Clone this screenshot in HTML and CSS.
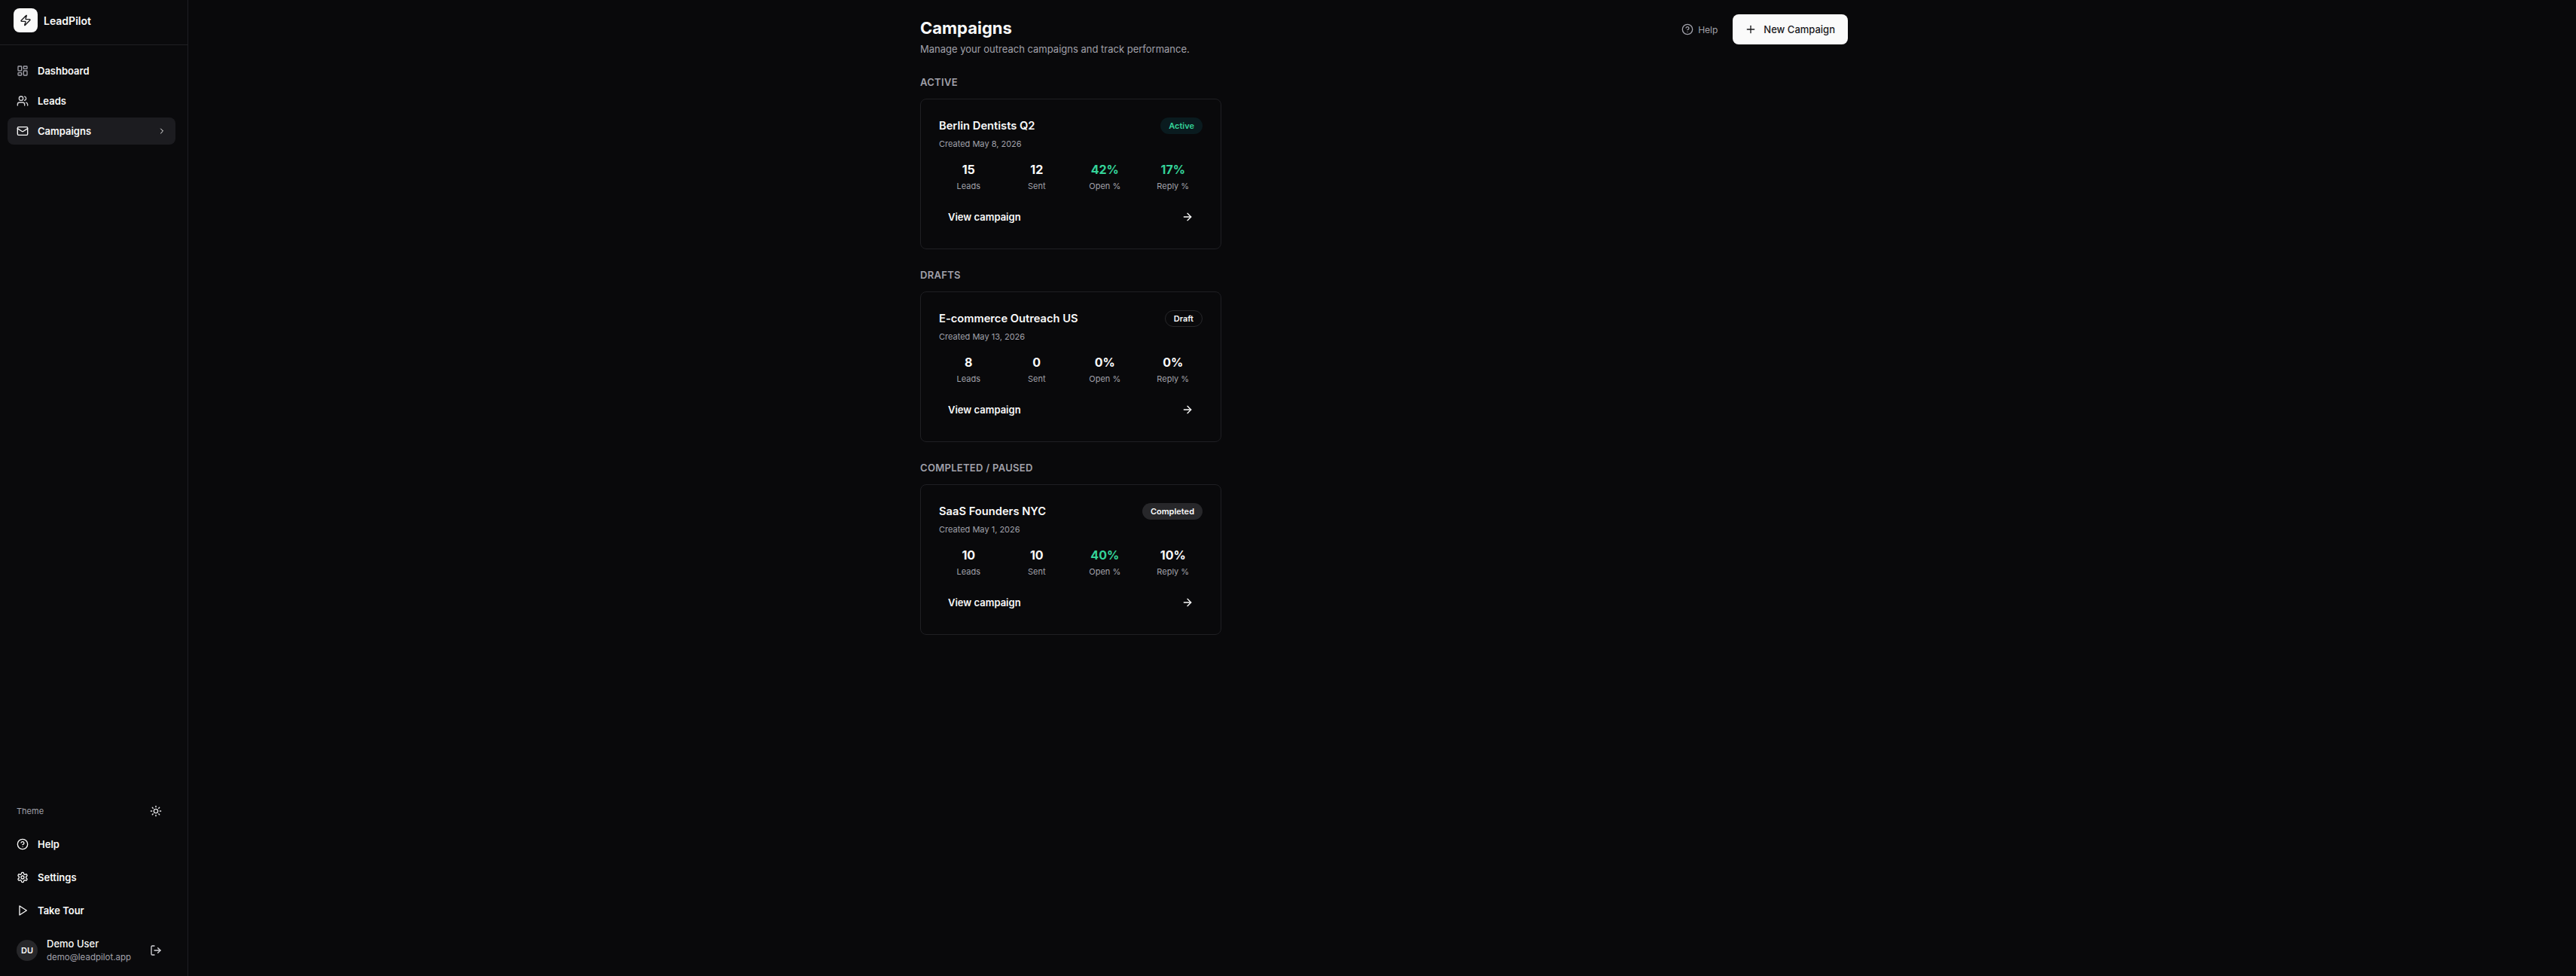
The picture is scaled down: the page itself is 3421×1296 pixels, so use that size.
FILE: index.html
```html
<!DOCTYPE html>
<html lang="en">
<head>
  <meta charset="UTF-8" />
  <title>Campaigns - LeadPilot</title>
  <link rel="stylesheet" href="styles.css">
</head>
<body>
  <svg class="sprite" xmlns="http://www.w3.org/2000/svg">
    <symbol id="i-zap" viewBox="0 0 24 24"><path d="M4 14a1 1 0 0 1-.78-1.63l9.9-10.2a.5.5 0 0 1 .86.46l-1.92 6.02A1 1 0 0 0 13 10h7a1 1 0 0 1 .78 1.63l-9.9 10.2a.5.5 0 0 1-.86-.46l1.92-6.02A1 1 0 0 0 11 14z"/></symbol>
    <symbol id="i-dashboard" viewBox="0 0 24 24"><rect x="3" y="3" width="7" height="9" rx="1"/><rect x="14" y="3" width="7" height="5" rx="1"/><rect x="14" y="12" width="7" height="9" rx="1"/><rect x="3" y="16" width="7" height="5" rx="1"/></symbol>
    <symbol id="i-users" viewBox="0 0 24 24"><path d="M16 21v-2a4 4 0 0 0-4-4H6a4 4 0 0 0-4 4v2"/><circle cx="9" cy="7" r="4"/><path d="M22 21v-2a4 4 0 0 0-3-3.87"/><path d="M16 3.13a4 4 0 0 1 0 7.75"/></symbol>
    <symbol id="i-mail" viewBox="0 0 24 24"><rect x="2" y="4" width="20" height="16" rx="2"/><path d="m22 7-8.97 5.7a1.94 1.94 0 0 1-2.06 0L2 7"/></symbol>
    <symbol id="i-chevron" viewBox="0 0 24 24"><path d="m9 18 6-6-6-6"/></symbol>
    <symbol id="i-sun" viewBox="0 0 24 24"><circle cx="12" cy="12" r="4"/><path d="M12 2v2"/><path d="M12 20v2"/><path d="m4.93 4.93 1.41 1.41"/><path d="m17.66 17.66 1.41 1.41"/><path d="M2 12h2"/><path d="M20 12h2"/><path d="m6.34 17.66-1.41 1.41"/><path d="m19.07 4.93-1.41 1.41"/></symbol>
    <symbol id="i-help" viewBox="0 0 24 24"><circle cx="12" cy="12" r="10"/><path d="M9.09 9a3 3 0 0 1 5.83 1c0 2-3 3-3 3"/><path d="M12 17h.01"/></symbol>
    <symbol id="i-settings" viewBox="0 0 24 24"><path d="M12.22 2h-.44a2 2 0 0 0-2 2v.18a2 2 0 0 1-1 1.73l-.43.25a2 2 0 0 1-2 0l-.15-.08a2 2 0 0 0-2.73.73l-.22.38a2 2 0 0 0 .73 2.73l.15.1a2 2 0 0 1 1 1.72v.51a2 2 0 0 1-1 1.74l-.15.09a2 2 0 0 0-.73 2.73l.22.38a2 2 0 0 0 2.73.73l.15-.08a2 2 0 0 1 2 0l.43.25a2 2 0 0 1 1 1.73V20a2 2 0 0 0 2 2h.44a2 2 0 0 0 2-2v-.18a2 2 0 0 1 1-1.73l.43-.25a2 2 0 0 1 2 0l.15.08a2 2 0 0 0 2.73-.73l.22-.39a2 2 0 0 0-.73-2.73l-.15-.08a2 2 0 0 1-1-1.74v-.5a2 2 0 0 1 1-1.74l.15-.09a2 2 0 0 0 .73-2.73l-.22-.38a2 2 0 0 0-2.73-.73l-.15.08a2 2 0 0 1-2 0l-.43-.25a2 2 0 0 1-1-1.73V4a2 2 0 0 0-2-2z"/><circle cx="12" cy="12" r="3"/></symbol>
    <symbol id="i-play" viewBox="0 0 24 24"><polygon points="6 3 20 12 6 21 6 3"/></symbol>
    <symbol id="i-logout" viewBox="0 0 24 24"><path d="M9 21H5a2 2 0 0 1-2-2V5a2 2 0 0 1 2-2h4"/><path d="m16 17 5-5-5-5"/><path d="M21 12H9"/></symbol>
    <symbol id="i-plus" viewBox="0 0 24 24"><path d="M5 12h14"/><path d="M12 5v14"/></symbol>
    <symbol id="i-arrow" viewBox="0 0 24 24"><path d="M5 12h14"/><path d="m12 5 7 7-7 7"/></symbol>
  </svg>

  <div class="app">
    <aside class="sidebar">
      <div class="brand">
        <div class="brand-logo"><svg class="icon"><use href="#i-zap"/></svg></div>
        <span class="brand-name">LeadPilot</span>
      </div>
      <nav class="nav">
        <a class="nav-item muted-icon"><svg class="icon"><use href="#i-dashboard"/></svg>Dashboard</a>
        <a class="nav-item"><svg class="icon"><use href="#i-users"/></svg>Leads</a>
        <a class="nav-item active"><svg class="icon"><use href="#i-mail"/></svg>Campaigns<svg class="icon icon-12 nav-chevron"><use href="#i-chevron"/></svg></a>
      </nav>
      <div class="sidebar-foot">
        <div class="theme-row">
          <span>Theme</span>
          <svg class="icon"><use href="#i-sun"/></svg>
        </div>
        <a class="foot-item"><svg class="icon"><use href="#i-help"/></svg>Help</a>
        <a class="foot-item"><svg class="icon"><use href="#i-settings"/></svg>Settings</a>
        <a class="foot-item"><svg class="icon"><use href="#i-play"/></svg>Take Tour</a>
        <div class="user-row">
          <div class="avatar">DU</div>
          <div class="user-info">
            <div class="user-name">Demo User</div>
            <div class="user-email">demo@leadpilot.app</div>
          </div>
          <svg class="icon user-logout"><use href="#i-logout"/></svg>
        </div>
      </div>
    </aside>

    <main class="main">
      <div class="content">
        <header class="page-head">
          <div>
            <h1>Campaigns</h1>
            <p class="subtitle">Manage your outreach campaigns and track performance.</p>
          </div>
          <div class="head-actions">
            <a class="help-link"><svg class="icon"><use href="#i-help"/></svg>Help</a>
            <button class="btn-primary"><svg class="icon"><use href="#i-plus"/></svg>New Campaign</button>
          </div>
        </header>

        <section class="group">
          <h2>Active</h2>
          <article class="card">
            <div class="card-top">
              <h3>Berlin Dentists Q2</h3>
              <span class="badge badge-active">Active</span>
            </div>
            <div class="card-date">Created May 8, 2026</div>
            <div class="stats">
              <div class="stat"><b>15</b><span>Leads</span></div>
              <div class="stat"><b>12</b><span>Sent</span></div>
              <div class="stat"><b class="good">42%</b><span>Open %</span></div>
              <div class="stat"><b class="good">17%</b><span>Reply %</span></div>
            </div>
            <a class="card-link">View campaign<svg class="icon"><use href="#i-arrow"/></svg></a>
          </article>
        </section>

        <section class="group">
          <h2>Drafts</h2>
          <article class="card">
            <div class="card-top">
              <h3>E-commerce Outreach US</h3>
              <span class="badge badge-draft">Draft</span>
            </div>
            <div class="card-date">Created May 13, 2026</div>
            <div class="stats">
              <div class="stat"><b>8</b><span>Leads</span></div>
              <div class="stat"><b>0</b><span>Sent</span></div>
              <div class="stat"><b>0%</b><span>Open %</span></div>
              <div class="stat"><b>0%</b><span>Reply %</span></div>
            </div>
            <a class="card-link">View campaign<svg class="icon"><use href="#i-arrow"/></svg></a>
          </article>
        </section>

        <section class="group">
          <h2>Completed / Paused</h2>
          <article class="card">
            <div class="card-top">
              <h3>SaaS Founders NYC</h3>
              <span class="badge badge-done">Completed</span>
            </div>
            <div class="card-date">Created May 1, 2026</div>
            <div class="stats">
              <div class="stat"><b>10</b><span>Leads</span></div>
              <div class="stat"><b>10</b><span>Sent</span></div>
              <div class="stat"><b class="good">40%</b><span>Open %</span></div>
              <div class="stat"><b>10%</b><span>Reply %</span></div>
            </div>
            <a class="card-link">View campaign<svg class="icon"><use href="#i-arrow"/></svg></a>
          </article>
        </section>
      </div>
    </main>
  </div>
</body>
</html>
```

FILE: styles.css
```css
* { box-sizing: border-box; margin: 0; padding: 0; }
html, body { height: 100%; }
body { font-family: Inter, "Liberation Sans", sans-serif; background-color: #09090b; color: #fafafa; font-size: 13px; overflow: hidden; }
a { color: inherit; text-decoration: none; }
.sprite { display: none; }
.icon { width: 16px; height: 16px; fill: none; stroke: currentColor; stroke-width: 2; stroke-linecap: round; stroke-linejoin: round; flex-shrink: 0; }
.icon-12 { width: 12px; height: 12px; }

.app { display: flex; height: 100%; }
.sidebar { width: 250px; flex-shrink: 0; display: flex; flex-direction: column; background-color: #0a0a0c; border-right: 1px solid #1f1f23; }
.brand { height: 60px; display: flex; align-items: center; gap: 8px; padding: 0 18px 5px; border-bottom: 1px solid #1f1f23; }
.brand-logo { width: 32px; height: 32px; border-radius: 8px; background-color: #fafafa; color: #18181b; display: flex; align-items: center; justify-content: center; }
.brand-name { font-size: 14px; font-weight: 600; }
.nav { flex: 1; padding: 16px 16px 0 10px; display: flex; flex-direction: column; gap: 4px; }
.nav-item { height: 36px; display: flex; align-items: center; gap: 12px; padding: 0 12px; border-radius: 8px; font-size: 13px; font-weight: 600; }
.nav-item .icon { color: #d4d4d8; }
.muted-icon .icon { color: #a1a1aa; }
.nav-item.active { background-color: #1c1c20; }
.nav-item.active .icon { color: #fafafa; }
.nav-item .nav-chevron { margin-left: auto; color: #52525b; }
.sidebar-foot { padding: 0 16px 16px 22px; }
.theme-row { display: flex; align-items: center; justify-content: space-between; height: 32px; font-size: 11px; color: #a1a1aa; margin-bottom: 6px; padding-right: 18px; }
.theme-row .icon { color: #e4e4e7; }
.foot-item { height: 44px; display: flex; align-items: center; gap: 12px; font-size: 13px; font-weight: 600; }
.user-row { display: flex; align-items: center; gap: 12px; margin-top: 13px; padding-right: 18px; }
.avatar { width: 28px; height: 28px; border-radius: 50%; background-color: #27272a; display: flex; align-items: center; justify-content: center; font-size: 11px; font-weight: 600; }
.user-info { flex: 1; min-width: 0; }
.user-name { font-size: 13px; font-weight: 500; line-height: 18px; }
.user-email { font-size: 11.5px; color: #a1a1aa; line-height: 18px; }
.user-logout { color: #d4d4d8; }

.main { flex: 1; min-width: 0; display: flex; justify-content: center; padding-left: 5px; }
.content { width: 1232px; padding-top: 19px; }
.page-head { display: flex; justify-content: space-between; align-items: flex-start; margin-bottom: 24px; }
h1 { font-size: 22px; font-weight: 700; line-height: 36px; }
.subtitle { font-size: 13px; color: #a1a1aa; line-height: 20px; }
.head-actions { display: flex; align-items: center; gap: 20px; }
.help-link { display: flex; align-items: center; gap: 6px; font-size: 12px; color: #a1a1aa; }
.btn-primary { height: 40px; display: flex; align-items: center; gap: 9px; padding: 0 17px 0 16px; border: none; border-radius: 8px; background-color: #fafafa; color: #18181b; font-family: inherit; font-size: 13px; font-weight: 500; }
.group { margin-bottom: 24px; }
h2 { font-size: 13px; font-weight: 600; text-transform: uppercase; letter-spacing: 0.3px; color: #a1a1aa; line-height: 20px; margin-bottom: 12px; }
.card { width: 400px; height: 200px; border: 1px solid #1f1f23; border-radius: 8px; padding: 24px; background-color: #09090b; }
.card-top { display: flex; justify-content: space-between; align-items: center; height: 22px; }
h3 { font-size: 14.7px; font-weight: 600; }
.badge { height: 22px; display: flex; align-items: center; padding: 0 11px; border-radius: 999px; font-size: 11px; font-weight: 600; }
.badge-active { background-color: #0a1b1f; color: #34d399; }
.badge-draft { border: 1px solid #27272a; }
.badge-done { background-color: #27272a; }
.card-date { font-size: 11px; color: #a1a1aa; line-height: 18px; margin-top: 4px; }
.stats { display: grid; grid-template-columns: repeat(4, 1fr); gap: 12px; margin-top: 11px; text-align: center; }
.stat b { display: block; font-size: 16px; font-weight: 700; line-height: 28px; }
.stat b.good { color: #34d399; }
.stat span { display: block; font-size: 11px; color: #a1a1aa; line-height: 16px; }
.card-link { height: 36px; display: flex; align-items: center; justify-content: space-between; padding: 0 12px; margin-top: 15px; font-size: 13px; font-weight: 600; }
```
